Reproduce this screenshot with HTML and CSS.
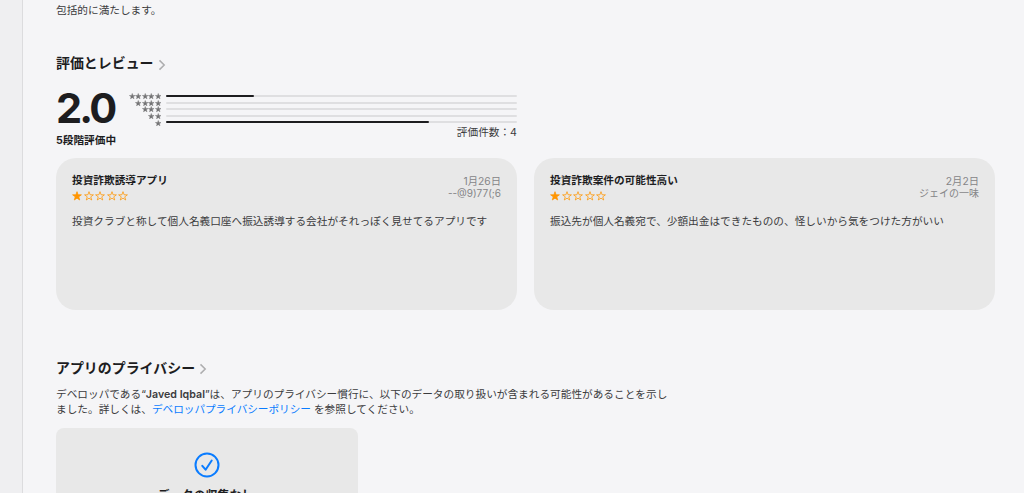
FILE: index.html
```html
<!DOCTYPE html>
<html lang="ja">
<head>
<meta charset="utf-8">
<title>評価とレビュー</title>
<link rel="stylesheet" href="styles.css">
</head>
<body>
<svg class="defs" aria-hidden="true">
  <symbol id="star" viewBox="0 0 12 12"><path d="M6 .8 7.3 4.5 11.3 4.6 8.1 7 9.3 10.8 6 8.6 2.7 10.8 3.9 7 .7 4.6 4.7 4.5Z"/></symbol>
  <symbol id="chevron" viewBox="0 0 8 12"><path d="M1.5 1.4 6.2 6 1.5 10.6"/></symbol>
</svg>
<div class="app">
  <aside class="sidebar"></aside>
  <main class="content">
    <p class="description">包括的に満たします。</p>

    <section class="ratings">
      <h2 class="heading"><span>評価とレビュー</span><svg class="chevron"><use href="#chevron"/></svg></h2>
      <div class="summary">
        <div class="score">
          <div class="score-value">2.0</div>
          <div class="score-label">5段階評価中</div>
        </div>
        <div class="histogram">
          <div class="row"><span class="stars"><svg><use href="#star"/></svg><svg><use href="#star"/></svg><svg><use href="#star"/></svg><svg><use href="#star"/></svg><svg><use href="#star"/></svg></span><span class="track"><span class="fill" style="width:25%"></span></span></div>
          <div class="row"><span class="stars"><svg><use href="#star"/></svg><svg><use href="#star"/></svg><svg><use href="#star"/></svg><svg><use href="#star"/></svg></span><span class="track"></span></div>
          <div class="row"><span class="stars"><svg><use href="#star"/></svg><svg><use href="#star"/></svg><svg><use href="#star"/></svg></span><span class="track"></span></div>
          <div class="row"><span class="stars"><svg><use href="#star"/></svg><svg><use href="#star"/></svg></span><span class="track"></span></div>
          <div class="row"><span class="stars"><svg><use href="#star"/></svg></span><span class="track"><span class="fill" style="width:75%"></span></span></div>
          <div class="count">評価件数：4</div>
        </div>
      </div>
      <div class="reviews">
        <article class="review">
          <header class="review-head">
            <div>
              <h3 class="review-title">投資詐欺誘導アプリ</h3>
              <div class="rating"><svg class="on"><use href="#star"/></svg><svg><use href="#star"/></svg><svg><use href="#star"/></svg><svg><use href="#star"/></svg><svg><use href="#star"/></svg></div>
            </div>
            <div class="meta"><div>1月26日</div><div class="author">--@9)77(;6</div></div>
          </header>
          <p class="review-body">投資クラブと称して個人名義口座へ振込誘導する会社がそれっぽく見せてるアプリです</p>
        </article>
        <article class="review">
          <header class="review-head">
            <div>
              <h3 class="review-title">投資詐欺案件の可能性高い</h3>
              <div class="rating"><svg class="on"><use href="#star"/></svg><svg><use href="#star"/></svg><svg><use href="#star"/></svg><svg><use href="#star"/></svg><svg><use href="#star"/></svg></div>
            </div>
            <div class="meta"><div>2月2日</div><div class="author">ジェイの一味</div></div>
          </header>
          <p class="review-body">振込先が個人名義宛で、少額出金はできたものの、怪しいから気をつけた方がいい</p>
        </article>
      </div>
    </section>

    <section class="privacy">
      <h2 class="heading"><span>アプリのプライバシー</span><svg class="chevron"><use href="#chevron"/></svg></h2>
      <p class="privacy-text">デベロッパである“<b>Javed Iqbal</b>”は、アプリのプライバシー慣行に、以下のデータの取り扱いが含まれる可能性があることを示し<br>ました。詳しくは、<a class="link">デベロッパプライバシーポリシー</a> を参照してください。</p>
      <div class="privacy-card">
        <svg class="check" viewBox="0 0 26 26"><circle cx="13" cy="13" r="11.5"/><path d="M8.3 13.8 11.6 17.7 17.7 8.5"/></svg>
        <h3 class="privacy-title">データの収集なし</h3>
      </div>
    </section>
  </main>
</div>
</body>
</html>
```
FILE: styles.css
```css
* { box-sizing: border-box; }
body {
  margin: 0;
  height: 493px;
  overflow: hidden;
  background: #f5f5f7;
  color: #3b3b3d;
  font: 10.66px/15px Inter, "Noto Sans CJK JP", sans-serif;
}
h2, h3, p { margin: 0; }
svg { display: block; fill: none; }
.defs { position: absolute; width: 0; height: 0; }

.app { display: flex; height: 493px; overflow: hidden; }
.sidebar { flex: none; width: 23px; background: #efeff1; border-right: 1px solid #dcdcde; }
.content { flex: none; width: 972px; padding: 3px 0 0 33px; }
.description { height: 15px; white-space: nowrap; }

.heading {
  display: flex;
  align-items: center;
  gap: 4px;
  height: 20px;
  color: #1d1d1f;
  font-size: 13.95px;
  line-height: 20px;
  font-weight: 700;
  white-space: nowrap;
}
.chevron { width: 8px; height: 12px; margin-top: 3px; stroke: #adadaf; stroke-width: 1.5; }

.ratings { margin-top: 35px; }
.summary { display: flex; width: 461px; height: 84.5px; }
.score { flex: none; width: 72.5px; padding-top: 16px; color: #1d1d1f; }
.score-value { height: 38px; font-size: 41.5px; line-height: 38px; font-weight: 700; letter-spacing: -2.8px; }
.score-label { margin-top: 6px; font-weight: 700; line-height: 15px; white-space: nowrap; }
.histogram { flex: 1; padding-top: 20.3px; }
.row { display: flex; align-items: center; gap: 5px; height: 6.55px; }
.stars { display: flex; justify-content: flex-end; width: 32.5px; }
.stars svg { flex: none; width: 6.5px; height: 6.5px; fill: #747476; stroke: #747476; stroke-width: .8; }
.track { flex: 1; height: 2px; margin-top: -1px; border-radius: 1px; background: #dfdfe1; }
.fill { display: block; height: 2px; border-radius: 1px; background: #1d1d1f; }
.count { text-align: right; line-height: 14px; }

.reviews { display: grid; grid-template-columns: 461px 461px; gap: 17px; }
.review { height: 152px; padding: 15px 16px; border-radius: 20px; background: #e8e8e8; }
.review-head { display: flex; justify-content: space-between; height: 34px; }
.review-title { color: #1d1d1f; font-size: 10.66px; line-height: 15px; font-weight: 700; }
.rating { display: flex; gap: 1.5px; margin-top: 3px; }
.rating svg { width: 10px; height: 10px; stroke: #ff9500; stroke-width: .9; }
.rating .on { fill: #ff9500; }
.meta { padding-top: 2px; color: #858587; font-size: 10.3px; line-height: 12.8px; text-align: right; }
.author { font-size: 10px; }
.review-body { margin-top: 7.5px; white-space: nowrap; }

.privacy { margin-top: 48px; }
.privacy-text { margin-top: 9.5px; line-height: 15px; white-space: nowrap; }
.privacy-text b { font-weight: 600; }
.link { color: #0a7cff; letter-spacing: -.04px; }
.privacy-card {
  display: flex;
  flex-direction: column;
  align-items: center;
  width: 302px;
  height: 120px;
  margin-top: 11px;
  padding-top: 24px;
  border-radius: 8px;
  background: #e8e8e8;
}
.check { width: 26px; height: 26px; stroke: #0a7cff; stroke-width: 2; stroke-linecap: round; stroke-linejoin: round; }
.privacy-title { margin: 8px 3px 0 0; color: #1d1d1f; font-size: 12px; line-height: 20px; font-weight: 700; }
```
